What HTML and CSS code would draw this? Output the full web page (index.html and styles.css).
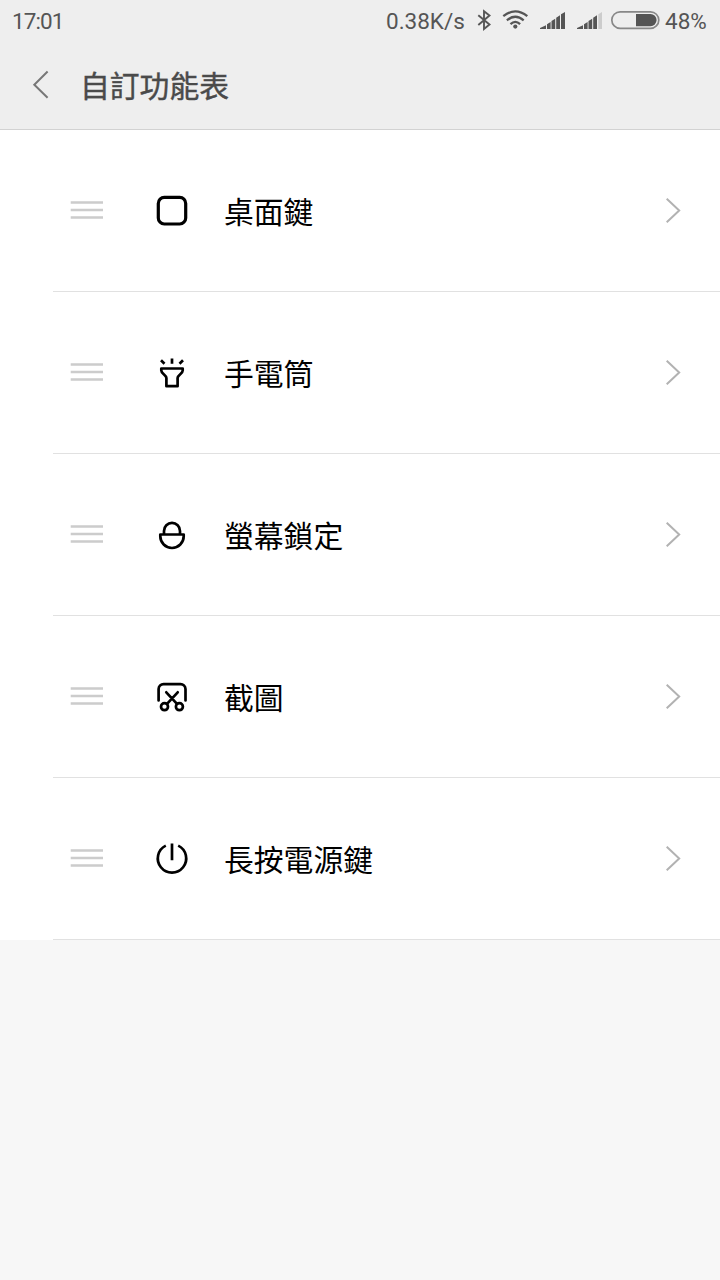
FILE: index.html
```html
<!DOCTYPE html>
<html lang="zh-Hant">
<head>
<meta charset="utf-8">
<title>自訂功能表</title>
<link rel="stylesheet" href="styles.css">
</head>
<body>
<header class="header">
  <div class="status">
    <span class="time">17:01</span>
    <span class="speed">0.38K/s</span>
    <svg class="bt" width="16" height="22" viewBox="476 9 16 22"><path d="M478.3 15.2L489.5 24.5L484 29V11.2L489.5 15.6L478.3 25"/></svg>
    <svg class="wifi" width="28" height="22" viewBox="501 9 28 22"><path d="M503.3 16.2Q515.3 6.600 527.300 16.200M506.900 20.300Q515.300 13.100 523.700 20.300M510.500 24.100Q515.300 19.700 520.100 24.100"/><circle cx="515.3" cy="26.600" r="2.100"/></svg>
    <svg class="signal" width="26" height="18" viewBox="0 0 26 18"><path d="M0 17V16L6 13.200V17ZM7 17V12.300L10.600 10V17ZM11.500 17V9L15.200 6.800V17ZM16.200 17V5.800L20 3.300V17ZM21 17V2.300L25 0V17Z"/></svg>
    <svg class="signal second" width="26" height="18" viewBox="0 0 26 18"><path d="M0 17V16L6 13.200V17ZM7 17V12.300L10.600 10V17ZM11.500 17V9L15.200 6.800V17ZM16.200 17V5.800L20 3.300V17Z"/><path class="faint" d="M21.300 17V2.300L25 0V17Z"/></svg>
    <svg class="battery" width="50" height="20" viewBox="610 10 50 20"><rect x="611.800" y="11.800" width="47" height="16.600" rx="8.300"/><path d="M636 14H650.500A6.100 6.100 0 0 1 650.500 26.200H636Z"/></svg>
    <span class="percent">48%</span>
  </div>
  <div class="titlebar">
    <svg class="back" width="18" height="30" viewBox="32 70 18 30"><path d="M47.600 71.500L34.300 84.700L47.600 97.800"/></svg>
    <h1 class="title">自訂功能表</h1>
  </div>
</header>
<ul class="list">
  <li class="row">
    <svg class="drag" width="34" height="21" viewBox="0 0 34 21"><path d="M.7 2.500H33M.7 10H33M.7 17.500H33"/></svg>
    <svg class="icon" width="34" height="33" viewBox="155 64 34 33"><rect class="thick" x="158.300" y="67.400" width="27.400" height="26.600" rx="6"/></svg>
    <span class="label">桌面鍵</span>
    <svg class="chevron" width="16" height="27" viewBox="665 67 16 27"><path d="M666.700 68.700L679.200 80.500L666.700 92.300"/></svg>
  </li>
  <li class="row">
    <svg class="drag" width="34" height="21" viewBox="0 0 34 21"><path d="M.7 2.500H33M.7 10H33M.7 17.500H33"/></svg>
    <svg class="icon" width="34" height="33" viewBox="155 64 34 33"><path d="M161.300 76.500H182.700V78.500C182.700 82 177.600 83 177.600 86V94.200H166.400V86C166.400 83 161.300 82 161.300 78.500Z"/><path class="butt" d="M161 68.200L164.500 71.700M172 66.500V71.800M183 68.200L179.500 71.700"/></svg>
    <span class="label">手電筒</span>
    <svg class="chevron" width="16" height="27" viewBox="665 67 16 27"><path d="M666.700 68.700L679.200 80.500L666.700 92.300"/></svg>
  </li>
  <li class="row">
    <svg class="drag" width="34" height="21" viewBox="0 0 34 21"><path d="M.7 2.500H33M.7 10H33M.7 17.500H33"/></svg>
    <svg class="icon" width="34" height="33" viewBox="155 64 34 33"><path d="M164 80.500V76.900A8 8 0 0 1 180 76.900V80.500M160.300 80.500H183.700V82.300A11.700 11.700 0 0 1 160.300 82.300Z"/></svg>
    <span class="label">螢幕鎖定</span>
    <svg class="chevron" width="16" height="27" viewBox="665 67 16 27"><path d="M666.700 68.700L679.200 80.500L666.700 92.300"/></svg>
  </li>
  <li class="row">
    <svg class="drag" width="34" height="21" viewBox="0 0 34 21"><path d="M.7 2.500H33M.7 10H33M.7 17.500H33"/></svg>
    <svg class="icon" width="34" height="33" viewBox="155 64 34 33"><path d="M158.600 84.500V73A5 5 0 0 1 163.600 68.200H180.400A5 5 0 0 1 185.500 73V84.500M166.300 76.300L177 87.800M177.700 76.300L167 87.800"/><circle cx="164.500" cy="90.700" r="3.500"/><circle cx="179.400" cy="90.700" r="3.500"/></svg>
    <span class="label">截圖</span>
    <svg class="chevron" width="16" height="27" viewBox="665 67 16 27"><path d="M666.700 68.700L679.200 80.500L666.700 92.300"/></svg>
  </li>
  <li class="row">
    <svg class="drag" width="34" height="21" viewBox="0 0 34 21"><path d="M.7 2.500H33M.7 10H33M.7 17.500H33"/></svg>
    <svg class="icon" width="34" height="33" viewBox="155 64 34 33"><path class="butt" d="M165.800 67.600A14.200 14.200 0 1 0 178.200 67.600M172 65.400V82.300"/></svg>
    <span class="label">長按電源鍵</span>
    <svg class="chevron" width="16" height="27" viewBox="665 67 16 27"><path d="M666.700 68.700L679.200 80.500L666.700 92.300"/></svg>
  </li>
</ul>
</body>
</html>
```
FILE: styles.css
```css
* { box-sizing: border-box; }
body {
  margin: 0;
  min-height: 1280px;
  background: #f7f7f7;
  font-family: Roboto, "Noto Sans CJK TC", sans-serif;
}
svg { display: block; flex: none; fill: none; }
.header {
  height: 130px;
  background: #eee;
  border-bottom: 1px solid #d2d2d2;
}
.status {
  display: flex;
  align-items: center;
  height: 40px;
  padding-left: 12px;
  font-size: 22.5px;
  line-height: 40px;
  color: #555;
  white-space: nowrap;
}
.time { width: 374px; letter-spacing: -0.9px; padding-top: 2px; }
.speed { width: 90px; padding-top: 2px; }
.bt { stroke: #555; stroke-width: 1.9; }
.wifi { margin-left: 9px; stroke: #555; stroke-width: 2.3; }
.wifi circle { fill: #555; stroke: none; }
.signal { margin: 2px 0 0 11px; fill: #555; }
.second { margin-left: 10.500px; }
.faint { fill: #ccc; }
.battery { margin-left: 7.500px; }
.battery rect { stroke: #888; stroke-width: 1.7; }
.battery path { fill: #555; }
.percent { margin-left: 5px; padding-top: 2px; }
.titlebar {
  display: flex;
  align-items: center;
  height: 90px;
  padding-left: 32px;
}
.back { stroke: #777; stroke-width: 2; }
.title {
  margin: 0 0 0 30px;
  padding-top: 4px;
  font-size: 29.8px;
  font-weight: 400;
  -webkit-text-stroke: 0.4px #4a4a4a;
  line-height: 44px;
  color: #4a4a4a;
}
.list { margin: 0; padding: 0 0 0 53px; list-style: none; background: #fff; }
.row {
  display: flex;
  align-items: center;
  height: 162px;
  padding: 0 39px 0 17px;
  border-bottom: 1px solid #e1e1e1;
}
.drag { stroke: #ccc; stroke-width: 2.6; }
.icon {
  margin-left: 51px;
  stroke: #000;
  stroke-width: 2.7;
  stroke-linecap: round;
  stroke-linejoin: round;
}
.icon .thick { stroke-width: 3.2; }
.icon .butt { stroke-linecap: butt; }
.label {
  flex: 1;
  margin-left: 35px;
  padding-top: 4px;
  font-size: 29.8px;
  line-height: 44px;
  color: #000;
}
.chevron { stroke: #b2b2b2; stroke-width: 2; }
```
